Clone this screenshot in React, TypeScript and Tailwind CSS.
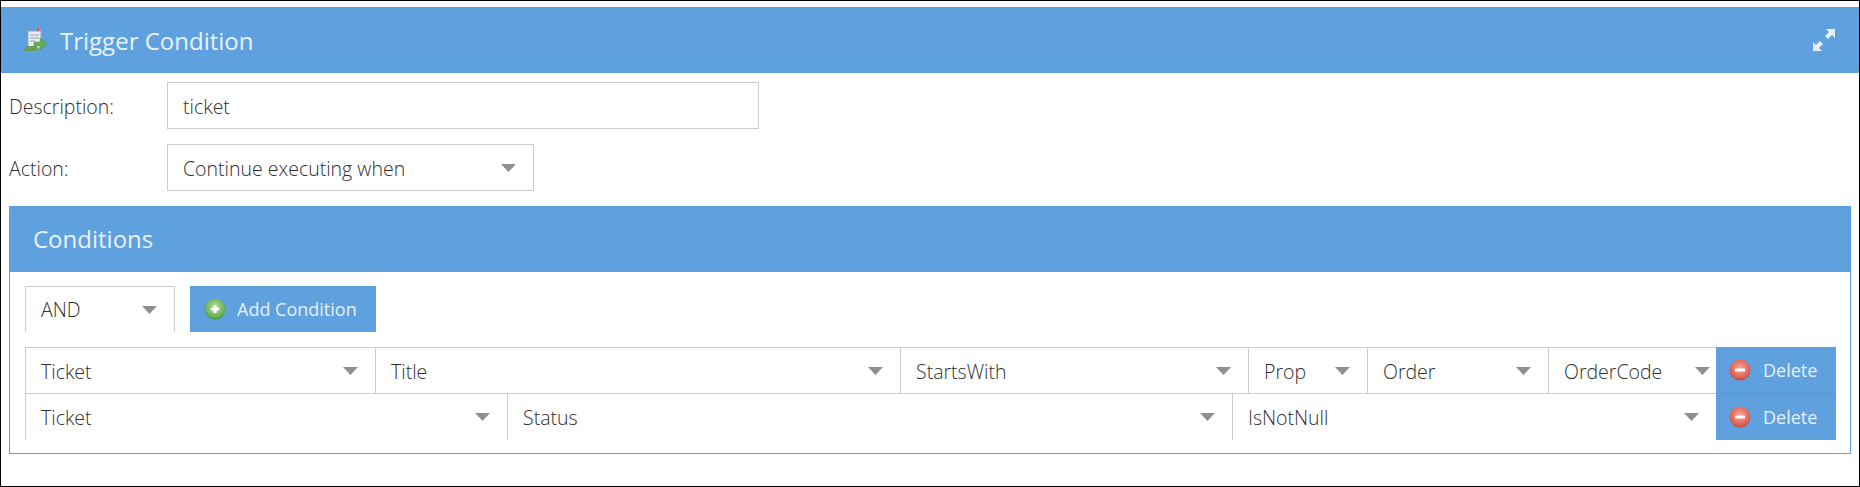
const blue = "bg-[#5fa1de]";

function Caret() {
  return (
    <svg width="15" height="8" viewBox="0 0 15 8" className="shrink-0">
      <path d="M0 0h15L7.5 8z" fill="#8f8f8f" />
    </svg>
  );
}

function AddIcon() {
  return (
    <svg width="22" height="22" viewBox="0 0 22 22" className="shrink-0">
      <defs>
        <radialGradient id="addFill" cx="50%" cy="42%" r="60%">
          <stop offset="0%" stopColor="#b6dda0" />
          <stop offset="70%" stopColor="#6fb85f" />
          <stop offset="100%" stopColor="#3f8f3f" />
        </radialGradient>
      </defs>
      <circle cx="11" cy="11" r="10.5" fill="url(#addFill)" />
      <path d="M9.5 7h3v2.5H15v3h-2.5V15h-3v-2.5H7v-3h2.5z" fill="#fff" />
    </svg>
  );
}

function DeleteIcon({ id }: { id: string }) {
  return (
    <svg width="22" height="22" viewBox="0 0 22 22" className="shrink-0">
      <defs>
        <radialGradient id={id} cx="50%" cy="42%" r="60%">
          <stop offset="0%" stopColor="#f3a79a" />
          <stop offset="70%" stopColor="#e2685a" />
          <stop offset="100%" stopColor="#b8483e" />
        </radialGradient>
      </defs>
      <circle cx="11" cy="11" r="10.5" fill={`url(#${id})`} />
      <rect x="6" y="9.5" width="10" height="3" fill="#fff" />
    </svg>
  );
}

function TriggerIcon() {
  return (
    <svg width="24" height="26" viewBox="0 0 24 26" className="shrink-0">
      <rect x="4" y="4" width="13" height="17" fill="#e8eef4" stroke="#9aa7b0" />
      <path d="M6 8h9M6 11h9M6 14h5" stroke="#8fa3b5" />
      <rect x="13" y="1" width="2" height="3" fill="#d9534f" />
      <path d="M0 24l3-5h10v5z" fill="#6f9a55" />
      <path d="M10 15h6v-4l7 6-7 6v-4h-6z" fill="#63ad5c" stroke="#4a8a48" strokeWidth="0.5" />
    </svg>
  );
}

function ExpandIcon() {
  return (
    <svg width="22" height="22" viewBox="0 0 22 22">
      <path d="M13 0h9v9l-3-3-4 4-3-3 4-4zM0 13l3 3 4-4 3 3-4 4 3 3H0z" fill="#e6eef7" />
    </svg>
  );
}

function Select({ label, className, tight, raised }: { label: string; className: string; tight?: boolean; raised?: boolean }) {
  return (
    <div className={`flex items-center justify-between pl-[15px] ${tight ? "pr-[6px]" : "pr-[17px]"} ${className}`}>
      <span className={`whitespace-nowrap ${raised ? "" : "translate-y-px"}`}>{label}</span>
      <Caret />
    </div>
  );
}

function DeleteButton({ id, className }: { id: string; className: string }) {
  return (
    <button className={`flex w-[120px] shrink-0 items-center gap-[12px] pl-[13px] text-[18px] font-normal text-[#e6f0fa] ${blue} ${className}`}>
      <DeleteIcon id={id} />
      Delete
    </button>
  );
}

export default function App() {
  return (
    <div
      className="flex h-[487px] w-[1860px] flex-col border border-black bg-white pt-[6px] text-[19.5px] font-light text-[#2f2f2f]"
      style={{ fontFamily: '"Open Sans", sans-serif' }}
    >
      <div className={`flex h-[66px] items-center justify-between pl-[23px] pr-[24px] ${blue}`}>
        <div className="flex items-center gap-[12px] text-[24px] font-normal text-[#e9f2fb]">
          <TriggerIcon />
          <span className="translate-y-px">Trigger Condition</span>
        </div>
        <ExpandIcon />
      </div>

      <div className="mt-[9px] flex h-[47px] items-center pl-[8px]">
        <span className="w-[158px] translate-y-px">Description:</span>
        <div className="flex h-full w-[592px] items-center border border-[#ccc] px-[15px]">
          <span className="translate-y-px">ticket</span>
        </div>
      </div>
      <div className="mt-[15px] flex h-[47px] items-center pl-[8px]">
        <span className="w-[158px] translate-y-px">Action:</span>
        <Select label="Continue executing when" className="h-full w-[367px] border border-[#ccc]" />
      </div>

      <div className="mx-[8px] mt-[15px] flex h-[248px] flex-col border border-[#5fa1de]">
        <div className={`flex h-[65px] shrink-0 items-center pl-[23px] text-[24px] font-normal text-[#e9f2fb] ${blue}`}>
          <span className="-translate-y-px">Conditions</span>
        </div>
        <div className="flex flex-col pl-[15px] pr-[14px] pt-[14px]">
          <div className="flex h-[46px] gap-[15px]">
            <Select label="AND" className="w-[150px] border border-b-0 border-[#ccc]" raised />
            <button className={`flex w-[186px] items-center gap-[11px] pl-[14px] text-[18px] font-normal text-[#e6f0fa] ${blue}`}>
              <AddIcon />
              Add Condition
            </button>
          </div>

          <div className="mt-[15px] flex h-[47px]">
            <div className="flex min-w-0 flex-1 border-y border-[#ccc]">
              <Select label="Ticket" className="w-[351px] border-x border-[#ccc]" />
              <Select label="Title" className="w-[525px] border-r border-[#ccc]" />
              <Select label="StartsWith" className="w-[348px] border-r border-[#ccc]" />
              <Select label="Prop" className="w-[119px] border-r border-[#ccc]" />
              <Select label="Order" className="w-[181px] border-r border-[#ccc]" />
              <Select label="OrderCode" className="flex-1" tight />
            </div>
            <DeleteButton id="deleteA" className="border-b border-[#5795cf]" />
          </div>
          <div className="flex h-[46px]">
            <div className="flex min-w-0 flex-1">
              <Select label="Ticket" className="w-[483px] border-x border-[#ccc]" />
              <Select label="Status" className="w-[725px] border-r border-[#ccc]" />
              <Select label="IsNotNull" className="flex-1" />
            </div>
            <DeleteButton id="deleteB" className="" />
          </div>
        </div>
      </div>
    </div>
  );
}
